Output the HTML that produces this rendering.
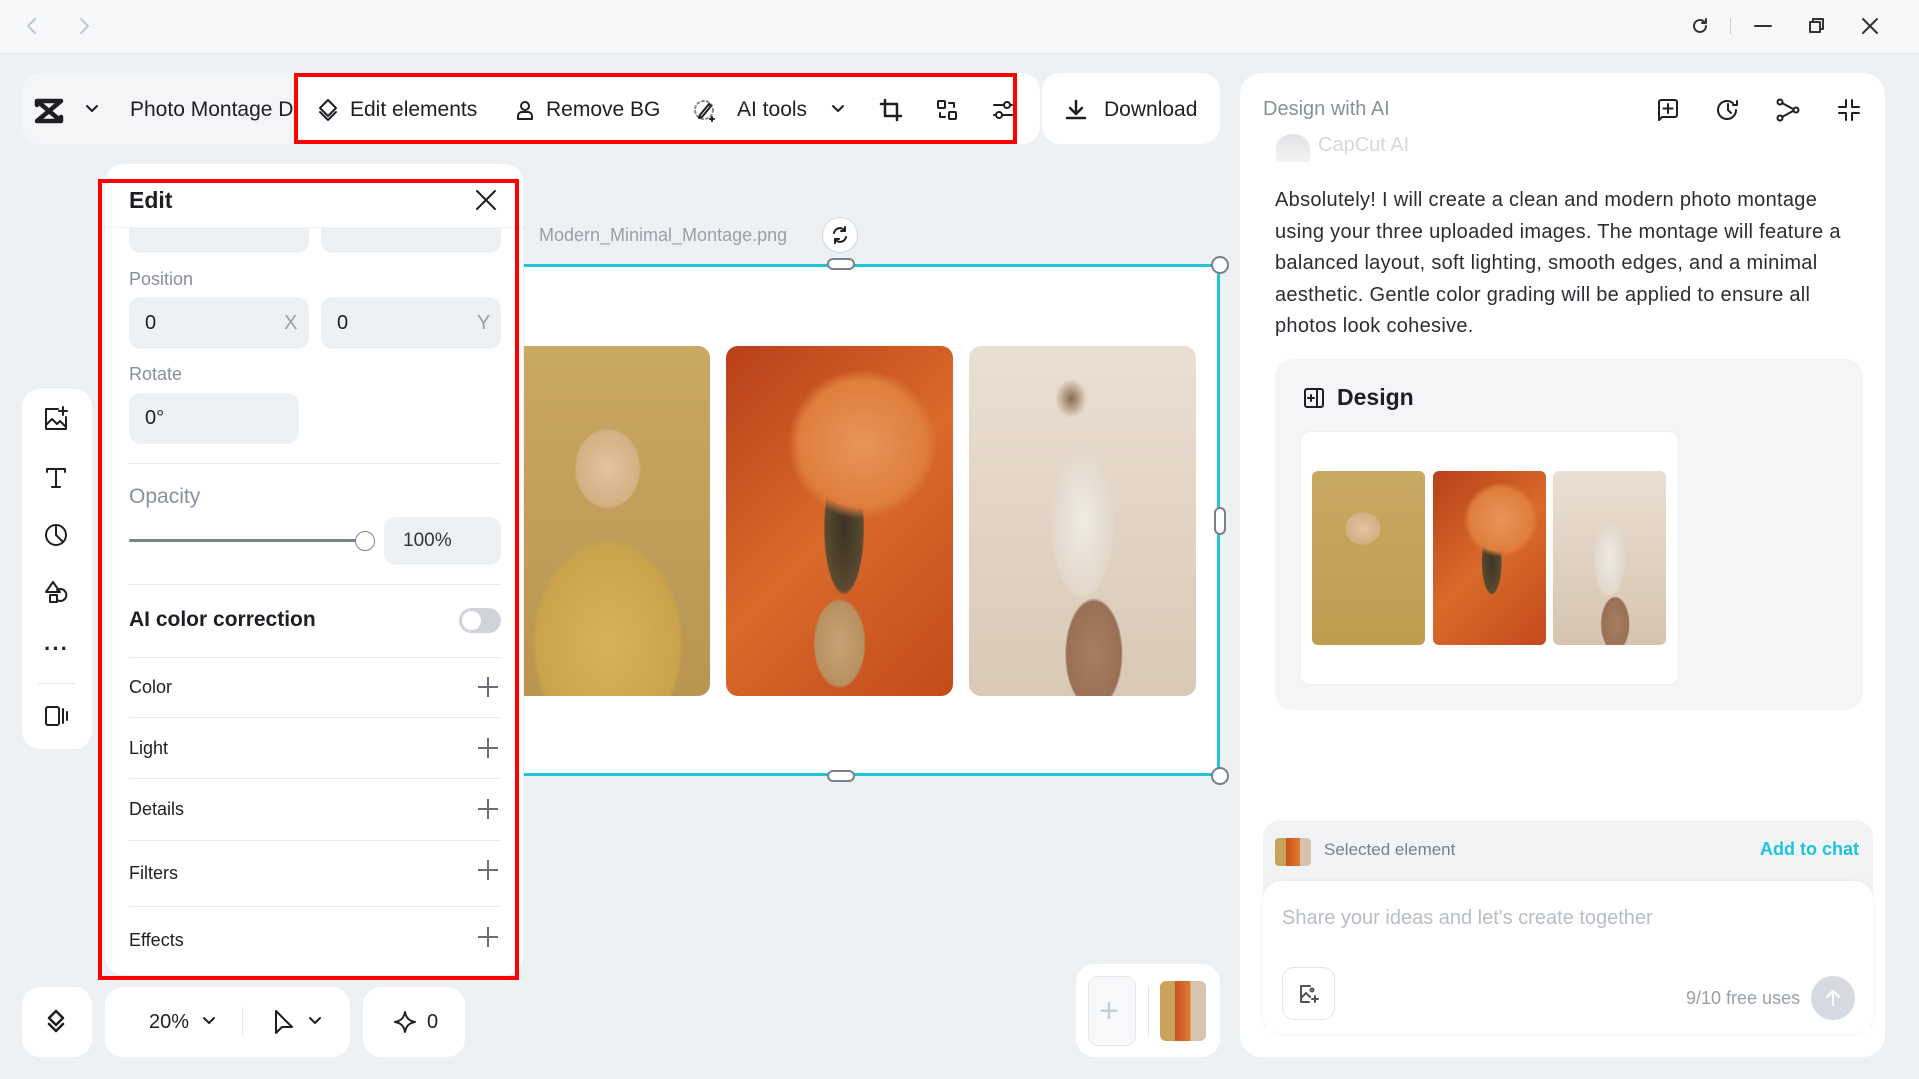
<!DOCTYPE html>
<html><head><meta charset="utf-8">
<style>
*{box-sizing:border-box;margin:0;padding:0}
body{width:1919px;height:1079px;overflow:hidden;background:#eef1f4;font-family:"Liberation Sans",sans-serif;color:#1d1f23;position:relative}
.a{position:absolute}
.card{position:absolute;background:#fff;border-radius:18px}
.t{position:absolute;white-space:nowrap}
.lbl{color:#8a9099;font-size:18px}
.inp{position:absolute;background:#eef1f4;border-radius:12px}
.row{position:absolute;left:129px;font-size:18px;color:#1d1f23}
.hr{position:absolute;left:129px;width:372px;height:1px;background:#e8eaed}
.plus{position:absolute;left:478px;width:20px;height:20px}
.plus:before{content:"";position:absolute;left:9px;top:0;width:2px;height:20px;background:#6b7078}
.plus:after{content:"";position:absolute;left:0;top:9px;width:20px;height:2px;background:#6b7078}
svg{position:absolute;fill:none;stroke:#1d1f23;stroke-width:2;stroke-linecap:round;stroke-linejoin:round}
</style></head><body>
<div class="a" style="left:0;top:0;width:1919px;height:54px;background:#f7f8fa;border-bottom:1px solid #e6e8eb"></div>
<svg style="left:23px;top:17px" width="18" height="18" viewBox="0 0 18 18"><path d="M12 2 5 9l7 7" stroke="#c4c8ce"/></svg>
<svg style="left:75px;top:17px" width="18" height="18" viewBox="0 0 18 18"><path d="M6 2l7 7-7 7" stroke="#c4c8ce"/></svg>
<svg style="left:1690px;top:16px" width="20" height="20" viewBox="0 0 20 20"><path d="M16 10a6 6 0 1 1-2-4.5M16 3v4h-4" stroke="#333"/></svg>
<div class="a" style="left:1730px;top:18px;width:1px;height:16px;background:#ccc"></div>
<svg style="left:1753px;top:16px" width="20" height="20" viewBox="0 0 20 20"><path d="M2 10h16" stroke="#333"/></svg>
<svg style="left:1806px;top:16px" width="20" height="20" viewBox="0 0 20 20"><path d="M4 6h10v10H4zM7 6V3h10v10h-3" stroke="#333"/></svg>
<svg style="left:1860px;top:16px" width="20" height="20" viewBox="0 0 20 20"><path d="M3 3l14 14M17 3 3 17" stroke="#333"/></svg>

<div class="a" style="left:22px;top:73px;width:1018px;height:71px;background:#f3f5f7;border-radius:18px"></div>
<div class="a" style="left:294px;top:73px;width:746px;height:71px;background:#fff;border-radius:0 18px 18px 0"></div>
<svg style="left:33px;top:97px" width="32" height="28" viewBox="0 0 32 28"><path d="M4 4h24L4 24h24zM4 4v4M28 20v4" stroke-width="4.5"/></svg>
<svg style="left:85px;top:104px" width="14" height="10" viewBox="0 0 14 10"><path d="M2 2l5 5 5-5"/></svg>
<div class="t" style="left:130px;top:98px;font-size:21px;width:164px;overflow:hidden">Photo Montage Design</div>
<svg style="left:316px;top:98px" width="24" height="24" viewBox="0 0 24 24"><path d="M12 2 4 10l8 8 8-8zM4 14l8 8 8-8"/></svg>
<div class="t" style="left:350px;top:98px;font-size:21px">Edit elements</div>
<svg style="left:513px;top:98px" width="24" height="24" viewBox="0 0 24 24"><circle cx="12" cy="8" r="4"/><path d="M5 21v-3a4 4 0 0 1 4-4h6a4 4 0 0 1 4 4v3z"/></svg>
<div class="t" style="left:546px;top:98px;font-size:21px">Remove BG</div>
<svg style="left:692px;top:98px" width="26" height="26" viewBox="0 0 26 26"><circle cx="12" cy="12" r="9" stroke-dasharray="2 3" stroke="#888"/><path d="M17 6 8 17l-1 3 3-1 9-11zM20 19v4M18 21h4"/></svg>
<div class="t" style="left:737px;top:98px;font-size:21px">AI tools</div>
<svg style="left:831px;top:104px" width="14" height="10" viewBox="0 0 14 10"><path d="M2 2l5 5 5-5"/></svg>
<svg style="left:879px;top:98px" width="24" height="24" viewBox="0 0 24 24"><path d="M6 2v16h16M2 6h16v16" stroke-width="2.5"/></svg>
<svg style="left:935px;top:98px" width="24" height="24" viewBox="0 0 24 24"><rect x="3" y="3" width="7" height="7" rx="1"/><rect x="14" y="14" width="7" height="7" rx="1"/><path d="M14 5h5v4M10 19H5v-4"/></svg>
<svg style="left:991px;top:98px" width="24" height="24" viewBox="0 0 24 24"><path d="M3 7h10M19 7h2M3 17h2M11 17h10"/><circle cx="16" cy="7" r="3"/><circle cx="8" cy="17" r="3"/></svg>
<div class="a" style="left:294px;top:73px;width:723px;height:71px;border:4px solid #f00"></div>
<div class="card" style="left:1042px;top:73px;width:178px;height:71px"></div>
<svg style="left:1064px;top:98px" width="24" height="24" viewBox="0 0 24 24"><path d="M12 3v12M6 10l6 6 6-6M3 20h18" stroke-width="2.5"/></svg>
<div class="t" style="left:1104px;top:98px;font-size:21px">Download</div>

<div class="card" style="left:22px;top:389px;width:70px;height:360px"></div>
<svg style="left:42px;top:405px" width="28" height="28" viewBox="0 0 28 28"><path d="M16 4H4v20h20V12M4 20l6-6 5 5 3-3 6 6M21 2v8M17 6h8"/></svg>
<svg style="left:43px;top:464px" width="26" height="26" viewBox="0 0 26 26"><path d="M4 5h18M13 5v18M4 5v3M22 5v3M9 23h8"/></svg>
<svg style="left:43px;top:522px" width="26" height="26" viewBox="0 0 26 26"><circle cx="13" cy="13" r="10"/><path d="M13 3v10l7 7"/></svg>
<svg style="left:43px;top:578px" width="26" height="26" viewBox="0 0 26 26"><path d="M3 14l7-10 7 10zM14 12a6 6 0 1 1 0 10M7 17h7v7H7z"/></svg>
<div class="t" style="left:44px;top:636px;font-size:22px;letter-spacing:1px;font-weight:bold">···</div>
<div class="a" style="left:38px;top:683px;width:38px;height:1px;background:#e3e5e8"></div>
<svg style="left:43px;top:703px" width="26" height="26" viewBox="0 0 26 26"><rect x="3" y="4" width="13" height="18" rx="2"/><path d="M20 6v14M24 9v8"/></svg>

<div class="t" style="left:539px;top:225px;font-size:18px;color:#9aa0a8">Modern_Minimal_Montage.png</div>
<div class="a" style="left:822px;top:217px;width:36px;height:36px;border-radius:50%;background:#fff;border:1px solid #d5d8dc"></div>
<svg style="left:829px;top:224px" width="22" height="22" viewBox="0 0 22 22"><path d="M5 9a6 6 0 0 1 11-2M17 13a6 6 0 0 1-11 2M16 3v4h-4M6 19v-4h4"/></svg>
<div class="a" style="left:524px;top:264px;width:696px;height:512px;background:#fff;border:3px solid #21c3dc;border-left:none"></div>
<div class="a" style="left:524px;top:346px;width:186px;height:350px;border-radius:0 12px 12px 0;background:radial-gradient(ellipse 28% 18% at 45% 35%,#e3c4a0 0,#d4b084 60%,transparent 64%),radial-gradient(ellipse 55% 40% at 45% 85%,#d6b25a 0,#c9a44c 70%,transparent 74%),linear-gradient(#c9a862,#b99550)"></div>
<div class="a" style="left:726px;top:346px;width:227px;height:350px;border-radius:12px;background:radial-gradient(circle at 60% 28%,#e8955a 0,#df7e3e 22%,transparent 26%),radial-gradient(ellipse 14% 30% at 52% 52%,#3a3324 0,#5a4a30 60%,transparent 64%),radial-gradient(ellipse 18% 20% at 50% 85%,#c8a277 0,#b89060 60%,transparent 64%),linear-gradient(135deg,#b8401a,#d96a2a 50%,#c24a1c)"></div>
<div class="a" style="left:969px;top:346px;width:227px;height:350px;border-radius:12px;background:radial-gradient(ellipse 22% 35% at 50% 50%,#f0ebe3 0,#e2d8cb 60%,transparent 64%),radial-gradient(ellipse 20% 25% at 55% 88%,#a87e62 0,#9a7055 60%,transparent 64%),radial-gradient(ellipse 10% 8% at 45% 15%,#8a6a4a 0,transparent 70%),linear-gradient(#eadfd2,#d9c9b6)"></div>
<div class="a" style="left:827px;top:258px;width:28px;height:12px;border-radius:6px;background:#fff;border:2px solid #7a8088"></div>
<div class="a" style="left:827px;top:770px;width:28px;height:12px;border-radius:6px;background:#fff;border:2px solid #7a8088"></div>
<div class="a" style="left:1214px;top:507px;width:12px;height:28px;border-radius:6px;background:#fff;border:2px solid #7a8088"></div>
<div class="a" style="left:1211px;top:256px;width:18px;height:18px;border-radius:50%;background:#fff;border:2px solid #7a8088"></div>
<div class="a" style="left:1211px;top:767px;width:18px;height:18px;border-radius:50%;background:#fff;border:2px solid #7a8088"></div>

<div class="card" style="left:105px;top:164px;width:418px;height:811px"></div>
<div class="t" style="left:129px;top:187px;font-size:23px;font-weight:bold">Edit</div>
<svg style="left:474px;top:188px" width="24" height="24" viewBox="0 0 24 24"><path d="M3 3l18 18M21 3 3 21"/></svg>
<div class="hr" style="left:105px;width:418px;top:227px;background:#eef0f2"></div>
<div class="inp" style="left:129px;top:228px;width:180px;height:25px;border-radius:0 0 12px 12px"></div>
<div class="inp" style="left:321px;top:228px;width:180px;height:25px;border-radius:0 0 12px 12px"></div>
<div class="t lbl" style="left:129px;top:269px">Position</div>
<div class="inp" style="left:129px;top:297px;width:180px;height:52px"></div>
<div class="inp" style="left:321px;top:297px;width:180px;height:52px"></div>
<div class="t" style="left:145px;top:312px;font-size:20px">0</div>
<div class="t" style="left:284px;top:312px;font-size:20px;color:#9aa0a8">X</div>
<div class="t" style="left:337px;top:312px;font-size:20px">0</div>
<div class="t" style="left:477px;top:312px;font-size:20px;color:#9aa0a8">Y</div>
<div class="t lbl" style="left:129px;top:364px">Rotate</div>
<div class="inp" style="left:129px;top:393px;width:170px;height:51px"></div>
<div class="t" style="left:145px;top:407px;font-size:20px">0°</div>
<div class="hr" style="top:463px"></div>
<div class="t lbl" style="left:129px;top:485px;font-size:21px">Opacity</div>
<div class="a" style="left:129px;top:539px;width:236px;height:3px;background:#7a838d;border-radius:2px"></div>
<div class="a" style="left:355px;top:531px;width:20px;height:20px;border-radius:50%;background:#fff;border:1.5px solid #7a838d"></div>
<div class="inp" style="left:384px;top:517px;width:117px;height:48px"></div>
<div class="t" style="left:403px;top:530px;font-size:19px;color:#333">100%</div>
<div class="hr" style="top:584px"></div>
<div class="t" style="left:129px;top:608px;font-size:21px;font-weight:bold;color:#1d1f23">AI color correction</div>
<div class="a" style="left:459px;top:608px;width:42px;height:25px;border-radius:13px;background:#cfd4da"></div>
<div class="a" style="left:462px;top:611px;width:19px;height:19px;border-radius:50%;background:#fff"></div>
<div class="hr" style="top:657px"></div>
<div class="row" style="top:677px">Color</div><div class="plus" style="top:677px"></div>
<div class="hr" style="top:717px"></div>
<div class="row" style="top:738px">Light</div><div class="plus" style="top:738px"></div>
<div class="hr" style="top:778px"></div>
<div class="row" style="top:799px">Details</div><div class="plus" style="top:799px"></div>
<div class="hr" style="top:840px"></div>
<div class="row" style="top:863px">Filters</div><div class="plus" style="top:860px"></div>
<div class="hr" style="top:906px"></div>
<div class="row" style="top:930px">Effects</div><div class="plus" style="top:927px"></div>
<div class="a" style="left:98px;top:179px;width:421px;height:801px;border:4px solid #f00"></div>

<div class="card" style="left:22px;top:987px;width:70px;height:70px"></div>
<svg style="left:43px;top:1009px" width="26" height="26" viewBox="0 0 26 26"><path d="M13 2 6 9l7 7 7-7zM6 15l7 7 7-7" stroke-width="2.5"/></svg>
<div class="card" style="left:105px;top:987px;width:245px;height:70px"></div>
<div class="t" style="left:149px;top:1011px;font-size:20px">20%</div>
<svg style="left:202px;top:1016px" width="14" height="10" viewBox="0 0 14 10"><path d="M2 2l5 5 5-5"/></svg>
<div class="a" style="left:242px;top:1007px;width:1px;height:28px;background:#e3e5e8"></div>
<svg style="left:272px;top:1009px" width="24" height="26" viewBox="0 0 24 26"><path d="M4 2v22l6-6h10z"/></svg>
<svg style="left:308px;top:1016px" width="14" height="10" viewBox="0 0 14 10"><path d="M2 2l5 5 5-5"/></svg>
<div class="card" style="left:363px;top:987px;width:102px;height:70px"></div>
<svg style="left:393px;top:1010px" width="24" height="24" viewBox="0 0 24 24"><path d="M12 2c1 6 4 9 10 10-6 1-9 4-10 10-1-6-4-9-10-10 6-1 9-4 10-10z"/></svg>
<div class="t" style="left:427px;top:1011px;font-size:20px">0</div>
<div class="card" style="left:1076px;top:964px;width:144px;height:93px"></div>
<div class="a" style="left:1088px;top:976px;width:48px;height:70px;border:1px solid #e6e8eb;border-radius:10px;background:#f8f9fa"></div>
<div class="t" style="left:1099px;top:992px;font-size:34px;color:#c9cdd2">+</div>
<div class="a" style="left:1148px;top:986px;width:1px;height:50px;background:#e3e5e8"></div>
<div class="a" style="left:1160px;top:981px;width:46px;height:60px;border-radius:6px;background:linear-gradient(90deg,#c8a35c 0,#c8a35c 33%,#c85420 33%,#e07a30 66%,#d8c4ae 66%)"></div>

<div class="card" style="left:1240px;top:73px;width:645px;height:984px;border-radius:22px"></div>
<div class="t" style="left:1263px;top:98px;font-size:20px;color:#8a9099">Design with AI</div>
<svg style="left:1655px;top:97px" width="26" height="26" viewBox="0 0 26 26"><path d="M4 23V5a2 2 0 0 1 2-2h14a2 2 0 0 1 2 2v13a2 2 0 0 1-2 2H7zM13 7v9M8.5 11.5h9"/></svg>
<svg style="left:1715px;top:97px" width="26" height="26" viewBox="0 0 26 26"><path d="M21 13a9 9 0 1 1-3-6.7M13 7v6l3 3M22 4v4h-4"/></svg>
<svg style="left:1775px;top:97px" width="26" height="26" viewBox="0 0 26 26"><circle cx="5" cy="5" r="2.5"/><circle cx="5" cy="21" r="2.5"/><circle cx="21" cy="13" r="2.5"/><path d="M7 6l11 6M7 20l11-6"/></svg>
<svg style="left:1836px;top:97px" width="26" height="26" viewBox="0 0 26 26"><path d="M10 3v7H3M16 3v7h7M10 23v-7H3M16 23v-7h7"/></svg>
<div class="a" style="left:1276px;top:134px;width:34px;height:28px;border-radius:50% 50% 0 0;background:linear-gradient(#e0e2e5,#f3f4f5)"></div>
<div class="t" style="left:1318px;top:137px;font-size:20px;color:#d5d8dc;height:22px;overflow:hidden;line-height:16px">CapCut AI</div>
<div class="a" style="left:1275px;top:185px;width:575px;font-size:20px;line-height:31.5px;color:#2a2d31;letter-spacing:0.3px">Absolutely! I will create a clean and modern photo montage using your three uploaded images. The montage will feature a balanced layout, soft lighting, smooth edges, and a minimal aesthetic. Gentle color grading will be applied to ensure all photos look cohesive.</div>
<div class="a" style="left:1275px;top:359px;width:588px;height:351px;border-radius:18px;background:#f3f5f7"></div>
<svg style="left:1302px;top:386px" width="24" height="24" viewBox="0 0 24 24"><rect x="3" y="3" width="18" height="18" rx="2"/><path d="M15 3v18M6 12h6M9 9v6"/></svg>
<div class="t" style="left:1337px;top:384px;font-size:23px;font-weight:bold;color:#1d1f23">Design</div>
<div class="a" style="left:1300px;top:431px;width:379px;height:254px;border-radius:10px;background:#fff;border:1px solid #eceef0"></div>
<div class="a" style="left:1312px;top:471px;width:113px;height:174px;border-radius:6px;background:radial-gradient(ellipse 25% 15% at 45% 33%,#e3c4a0 0,#d4b084 60%,transparent 64%),linear-gradient(#c9a862,#c09c50)"></div>
<div class="a" style="left:1433px;top:471px;width:113px;height:174px;border-radius:6px;background:radial-gradient(circle at 60% 28%,#e8955a 0,#df7e3e 22%,transparent 26%),radial-gradient(ellipse 14% 30% at 52% 52%,#3a3324 0,#5a4a30 60%,transparent 64%),linear-gradient(135deg,#b8401a,#d96a2a 50%,#c24a1c)"></div>
<div class="a" style="left:1553px;top:471px;width:113px;height:174px;border-radius:6px;background:radial-gradient(ellipse 22% 35% at 50% 50%,#f0ebe3 0,#e2d8cb 60%,transparent 64%),radial-gradient(ellipse 20% 25% at 55% 88%,#a87e62 0,#9a7055 60%,transparent 64%),linear-gradient(#eadfd2,#d6c4b0)"></div>
<div class="a" style="left:1263px;top:820px;width:610px;height:90px;border-radius:18px 18px 0 0;background:#f1f3f5"></div>
<div class="a" style="left:1275px;top:838px;width:36px;height:28px;border-radius:4px;background:linear-gradient(90deg,#c8a35c 0,#c8a35c 30%,#c85420 30%,#e07a30 70%,#d8c4ae 70%)"></div>
<div class="t" style="left:1324px;top:840px;font-size:17px;color:#7a8088">Selected element</div>
<div class="t" style="left:1760px;top:839px;font-size:18px;color:#1fc4dc;font-weight:bold">Add to chat</div>
<div class="a" style="left:1263px;top:881px;width:610px;height:153px;border-radius:18px;background:#fff;box-shadow:0 0 6px rgba(0,0,0,.06)"></div>
<div class="t" style="left:1282px;top:907px;font-size:20px;color:#b8bdc4">Share your ideas and let's create together</div>
<div class="a" style="left:1282px;top:967px;width:53px;height:53px;border-radius:12px;border:1px solid #e3e5e8"></div>
<svg style="left:1298px;top:983px" width="22" height="22" viewBox="0 0 22 22"><path d="M12 3H3v16h8M3 15l5-5 4 4M14 16h6M17 13v6" stroke="#555"/><circle cx="14" cy="7" r="1.5" stroke="#555"/></svg>
<div class="t" style="left:1686px;top:988px;font-size:18px;color:#9aa0a8">9/10 free uses</div>
<div class="a" style="left:1811px;top:976px;width:44px;height:44px;border-radius:50%;background:#d6dbe1"></div>
<svg style="left:1822px;top:987px" width="22" height="22" viewBox="0 0 22 22"><path d="M11 18V4M5 10l6-6 6 6" stroke="#fff"/></svg>
</body></html>
